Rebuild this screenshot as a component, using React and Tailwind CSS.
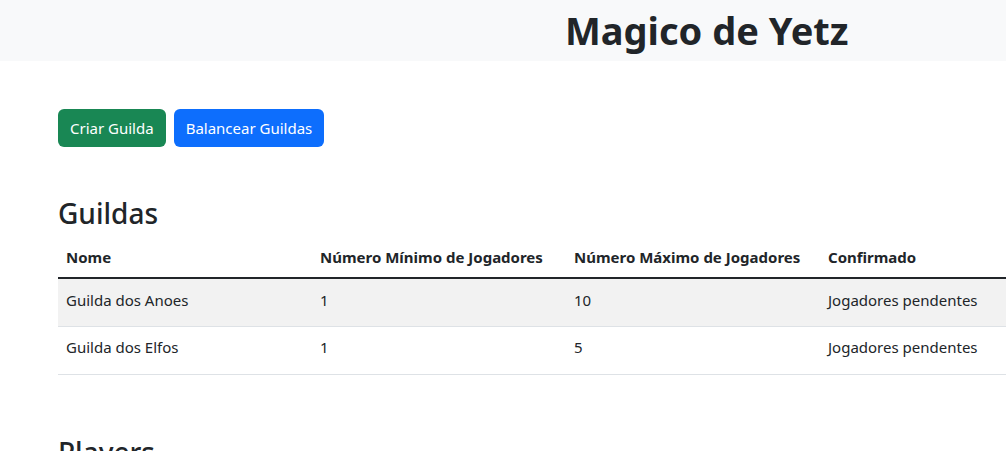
import React from "react";

const guildas = [
  { nome: "Guilda dos Anoes", min: 1, max: 10, status: "Jogadores pendentes" },
  { nome: "Guilda dos Elfos", min: 1, max: 5, status: "Jogadores pendentes" },
];

function App() {
  return (
    <div className="w-[1006px] h-[451px] overflow-hidden bg-white text-[#212529] font-['Noto_Sans',sans-serif]">
      {/* Header */}
      <header className="h-[61px] bg-[#f8f9fa] pl-[565px] pt-[6px]">
        <h1 className="text-[38px] leading-[48px] font-bold">Magico de Yetz</h1>
      </header>

      <main className="pl-[58px] pt-[48px]">
        <div className="flex gap-2">
          <button className="h-[38px] px-3 rounded-md bg-[#198754] text-white text-[15px]">
            Criar Guilda
          </button>
          <button className="h-[38px] px-3 rounded-md bg-[#0d6efd] text-white text-[15px]">
            Balancear Guildas
          </button>
        </div>

        <h3 className="mt-[49px] text-[28px] leading-[34px] font-medium">Guildas</h3>

        <table className="mt-[11px] w-[1016px] table-fixed border-collapse text-[15px]">
          <thead>
            <tr className="border-b-2 border-[#212529]">
              <th className="w-[254px] h-[37px] px-2 pb-1 text-left font-bold">Nome</th>
              <th className="w-[254px] px-2 pb-1 text-left font-bold">Número Mínimo de Jogadores</th>
              <th className="w-[254px] px-2 pb-1 text-left font-bold">Número Máximo de Jogadores</th>
              <th className="w-[254px] px-2 pb-1 text-left font-bold">Confirmado</th>
            </tr>
          </thead>
          <tbody>
            {guildas.map((g, i) => (
              <tr
                key={g.nome}
                className={`border-b border-[#dee2e6] ${i % 2 === 0 ? "bg-[#f2f2f2]" : "bg-white"}`}
              >
                <td className="h-[48px] px-2 pb-[5px]">{g.nome}</td>
                <td className="px-2 pb-[5px]">{g.min}</td>
                <td className="px-2 pb-[5px]">{g.max}</td>
                <td className="px-2 pb-[5px]">{g.status}</td>
              </tr>
            ))}
          </tbody>
        </table>

        <h3 className="mt-[60px] text-[28px] leading-[34px] font-medium">Players</h3>
      </main>
    </div>
  );
}

export default App;
